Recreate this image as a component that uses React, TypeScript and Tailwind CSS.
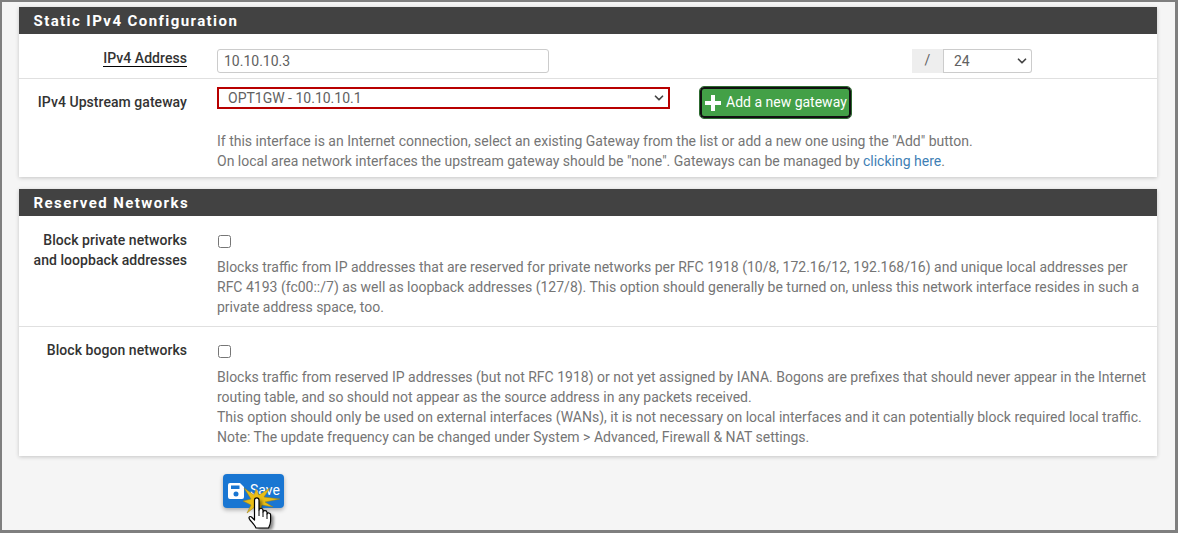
import React from 'react';
import { ChevronDown } from 'lucide-react';

const help = 'text-[14px] leading-[20px] text-[#757575]';

const Label: React.FC<{ children: React.ReactNode; underline?: boolean }> = ({ children, underline }) => (
    <div className="w-[168px] shrink-0 text-right text-[14px] leading-[20px] font-medium tracking-[0.05px] text-[#333333]">
        {underline ? <span className="border-b border-black">{children}</span> : children}
    </div>
);

const PanelHeader: React.FC<{ title: string }> = ({ title }) => (
    <div className="h-[27px] bg-[#424242] pl-[14.5px] text-[15px] leading-[28px] font-bold tracking-[1.42px] text-white">{title}</div>
);

const Checkbox: React.FC = () => (
    <div className="h-[13px] w-[13px] rounded-[2.5px] border border-[#767676] bg-white" />
);

const SaveIcon: React.FC = () => (
    <svg width="16" height="16" viewBox="0 0 16 16" className="shrink-0">
        <path fill="#fff" fillRule="evenodd" d="M2 0h10l4 4v10a2 2 0 0 1-2 2H2a2 2 0 0 1-2-2V2a2 2 0 0 1 2-2zm1 2.500v3.500h8.500V2.500zM8 8.500a2.500 2.500 0 1 0 0 5 2.500 2.500 0 0 0 0-5z" />
    </svg>
);

const handPath = 'M13.500 16c0-2.800 4.500-2.800 4.500 0v10c.2-2 4-2 4 .2v1.800c.2-1.800 3.800-1.800 4 .2v1.800c.2-1.600 3.600-1.400 3.600.8v6.200c0 3-1 5-2 7H15c-1-2.500-3-4.500-6-8-2-2.500-.5-4.500 1.500-3l3 3z';

const ClickBurst: React.FC = () => (
    <svg width="50" height="50" viewBox="0 0 50 50" className="absolute left-[18px] top-[10px] overflow-visible">
        <polygon
            fill="#e8bd17"
            stroke="#9a7f14"
            strokeWidth="0.5"
            points="3,4 13,11 15,5 18,11 29,4 23,13 39,15 24,18 32,23 21,21 19,27 15,22 6,29 10,21 2,17 10,15"
        />
        <path d={handPath} fill="#000" opacity="0.45" transform="translate(3 2)" className="blur-[1.5px]" />
        <path d={handPath} fill="#fff" stroke="#000" strokeWidth="1.2" strokeLinejoin="round" />
        <path d="M18 26v6M22 28v5M26 30v5" fill="none" stroke="#000" strokeWidth="1" />
    </svg>
);

const App: React.FC = () => {
    return (
        <div className="h-[533px] w-[1178px] overflow-hidden border-t-[2px] border-r-[3px] border-b-[3px] border-l-[2px] border-[#7f7f7f] bg-[#f5f5f5] pt-[5px] pl-[17px] font-['Roboto',sans-serif]">
            <div className="w-[1138px] bg-white shadow-[0_1px_4px_rgba(0,0,0,0.2)]">
                <PanelHeader title="Static IPv4 Configuration" />
                <div className="flex h-[45px] border-b border-[#e0e0e0] pt-[14px]">
                    <Label underline>IPv4 Address</Label>
                    <div className="mt-[1px] ml-[30px] h-[24px] w-[332px] rounded-[3px] border border-[#cccccc] pl-[6px] text-[14px] leading-[22px] text-[#616161]">10.10.10.3</div>
                    <div className="mt-[1px] ml-[363px] flex h-[24px]">
                        <div className="w-[32px] border-r border-[#cccccc] bg-[#eeeeee] text-center text-[14px] leading-[23px] text-[#616161]">/</div>
                        <div className="flex w-[88px] items-center justify-between rounded-r-[3px] border border-l-0 border-[#cccccc] pr-[2px] pl-[10px] text-[14px] text-[#616161]">
                            24
                            <ChevronDown size={14} strokeWidth={3} color="#444444" />
                        </div>
                    </div>
                </div>
                <div className="flex h-[98px]">
                    <div className="pt-[13px]">
                        <Label>IPv4 Upstream gateway</Label>
                    </div>
                    <div className="ml-[30px] flex-1">
                        <div className="flex items-start pt-[8px]">
                            <div className="flex h-[22px] w-[453px] items-center justify-between border-[2px] border-[#b80000] pr-[2px] pl-[9px] text-[14px] text-[#616161]">
                                OPT1GW - 10.10.10.1
                                <ChevronDown size={14} strokeWidth={3} color="#444444" />
                            </div>
                            <div className="ml-[30px] flex h-[31px] w-[151px] items-center rounded-[4px] border-[2px] border-[#111111] bg-[#43a047] pl-[3px] text-[14px] whitespace-nowrap text-white outline outline-1 outline-[#2e6b31]">
                                <svg width="16" height="16" viewBox="0 0 16 16" className="mr-[5px] shrink-0">
                                    <path fill="#fff" d="M6 0h4v6h6v4h-6v6H6v-6H0V6h6z" />
                                </svg>
                                Add a new gateway
                            </div>
                        </div>
                        <p className={`${help} mt-[13px]`}>
                            If this interface is an Internet connection, select an existing Gateway from the list or add a new one using the "Add" button.
                            <br />
                            On local area network interfaces the upstream gateway should be "none". Gateways can be managed by <span className="text-[#3f7fb5]">clicking here</span>.
                        </p>
                    </div>
                </div>
            </div>

            <div className="mt-[12px] w-[1138px] bg-white shadow-[0_1px_4px_rgba(0,0,0,0.2)]">
                <PanelHeader title="Reserved Networks" />
                <div className="flex h-[111px] border-b border-[#e0e0e0] pt-[14px]">
                    <Label>
                        Block private networks
                        <br />
                        and loopback addresses
                    </Label>
                    <div className="ml-[30px] flex-1 pr-[8px]">
                        <div className="pt-[5px] pl-[1px]"><Checkbox /></div>
                        <p className={`${help} mt-[9px]`}>
                            Blocks traffic from IP addresses that are reserved for private networks per RFC 1918 (10/8, 172.16/12, 192.168/16) and unique local addresses per
                            <br />
                            RFC 4193 (fc00::/7) as well as loopback addresses (127/8). This option should generally be turned on, unless this network interface resides in such a
                            <br />
                            private address space, too.
                        </p>
                    </div>
                </div>
                <div className="flex h-[129px] pt-[13px]">
                    <Label>Block bogon networks</Label>
                    <div className="ml-[30px] flex-1 pr-[8px]">
                        <div className="pt-[5px] pl-[1px]"><Checkbox /></div>
                        <p className={`${help} mt-[9px] whitespace-nowrap`}>
                            Blocks traffic from reserved IP addresses (but not RFC 1918) or not yet assigned by IANA. Bogons are prefixes that should never appear in the Internet
                            <br />
                            routing table, and so should not appear as the source address in any packets received.
                            <br />
                            This option should only be used on external interfaces (WANs), it is not necessary on local interfaces and it can potentially block required local traffic.
                            <br />
                            Note: The update frequency can be changed under System &gt; Advanced, Firewall &amp; NAT settings.
                        </p>
                    </div>
                </div>
            </div>

            <div className="relative mt-[18px] ml-[204px] flex h-[34px] w-[61px] items-center gap-[6px] rounded-[4px] bg-[#1976d2] pb-[1px] pl-[5px] text-[14px] text-white shadow-[0_2px_4px_rgba(0,0,0,0.3)]">
                <SaveIcon />
                Save
                <ClickBurst />
            </div>
        </div>
    );
};

export default App;
